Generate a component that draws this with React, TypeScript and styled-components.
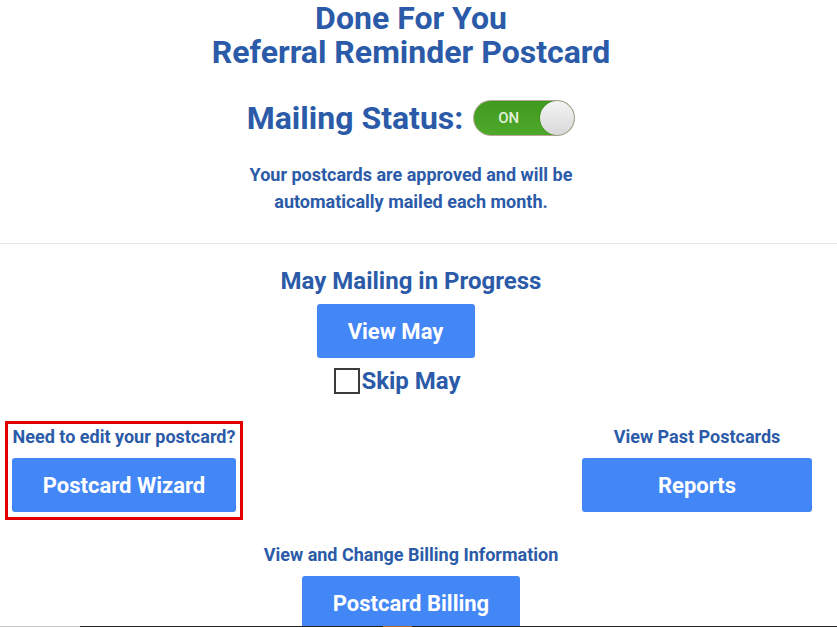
import React from 'react'
import styled, { createGlobalStyle } from 'styled-components'

const GlobalStyle = createGlobalStyle`
  body {
    margin: 0;
    background: #fff;
    font-family: Roboto, 'Liberation Sans', Arial, sans-serif;
  }
`

const blue = '#2b5ba8'

const Page = styled.div`
  width: 837px;
  height: 627px;
  overflow: hidden;
  position: relative;
`

// content column (page has a scrollbar gutter on the right)
const Content = styled.div`
  width: 822px;
  display: flex;
  flex-direction: column;
`

const Header = styled.section`
  display: flex;
  flex-direction: column;
  align-items: center;
  padding-top: 1px;
  padding-bottom: 28px;
`

const Rule = styled.hr`
  width: 837px;
  margin: 0;
  border: none;
  border-top: 1px solid #e6e6e6;
`

const Title = styled.h1`
  margin: 0;
  font-size: 32px;
  font-weight: 700;
  color: ${blue};
  text-align: center;
`

const TitleLine = styled.span`
  display: block;
  line-height: 34px;
`

const StatusRow = styled.div`
  display: flex;
  align-items: center;
  gap: 10px;
  margin-top: 30px;
`

const StatusLabel = styled.span`
  font-size: 32px;
  font-weight: 700;
  color: ${blue};
`

const Toggle = styled.div`
  position: relative;
  width: 102px;
  height: 36px;
  border-radius: 18px;
  background: linear-gradient(#3f9a1f, #4ea82a);
  border: 1px solid #b9a79a;
  box-sizing: border-box;
  display: flex;
  align-items: center;
  padding-left: 24px;
  color: #e4f0da;
  font-size: 15px;
  font-weight: 500;
`

const Knob = styled.span`
  position: absolute;
  right: 0;
  top: 0;
  width: 34px;
  height: 34px;
  border-radius: 50%;
  background: linear-gradient(#f4f4f4, #d8d8d8);
  box-shadow: 0 0 2px rgba(0, 0, 0, 0.3);
`

const Note = styled.p`
  margin: 24px 0 0;
  font-size: 18px;
  line-height: 27px;
  font-weight: 700;
  color: ${blue};
  text-align: center;
`

const Mailing = styled.section`
  display: flex;
  flex-direction: column;
  align-items: center;
  gap: 9px;
  padding-top: 23px;
`

const MailingActions = styled.div`
  display: flex;
  flex-direction: column;
  align-items: center;
  padding-right: 31px;
`

const SubTitle = styled.h2`
  margin: 0;
  font-size: 24px;
  line-height: 28px;
  font-weight: 700;
  color: ${blue};
`

const Button = styled.button<{ $w: number }>`
  width: ${p => p.$w}px;
  height: 54px;
  border: none;
  border-radius: 3px;
  background: #4386f5;
  color: #fff;
  font-family: inherit;
  font-size: 22px;
  font-weight: 700;
  cursor: pointer;
`

const SkipRow = styled.label`
  display: flex;
  align-items: center;
  gap: 1px;
  margin-top: 9px;
  margin-left: 4px;
  font-size: 24px;
  line-height: 28px;
  font-weight: 700;
  color: ${blue};
`

const Box = styled.span`
  width: 22px;
  height: 22px;
  border: 2px solid #3a3a3a;
  background: #fff;
`

const Columns = styled.div`
  display: flex;
  justify-content: space-between;
  padding: 26px 10px 0 5px;
`

const Highlight = styled.div`
  border: 3px solid #e00000;
  width: 238px;
  height: 99px;
  box-sizing: border-box;
  padding: 2px 4px 0 4px;
  display: flex;
  flex-direction: column;
  align-items: center;
  gap: 10px;
`

const Column = styled.div`
  display: flex;
  flex-direction: column;
  align-items: center;
  gap: 10px;
  padding-top: 5px;
`

const Caption = styled.div`
  font-size: 18px;
  line-height: 22px;
  font-weight: 700;
  color: ${blue};
  white-space: nowrap;
`

const Billing = styled.section`
  display: flex;
  flex-direction: column;
  align-items: center;
  gap: 10px;
  padding-top: 24px;
`

const BottomStrip = styled.div`
  position: absolute;
  left: 0;
  right: 0;
  bottom: 0;
  height: 1px;
  display: flex;
`

const Seg = styled.span<{ $c: string; $w: string }>`
  background: ${p => p.$c};
  width: ${p => p.$w};
`

export default function App() {
  return (
    <Page>
      <GlobalStyle />
      <Content>
        <Header>
          <Title>
            <TitleLine>Done For You</TitleLine>
            <TitleLine>Referral Reminder Postcard</TitleLine>
          </Title>
          <StatusRow>
            <StatusLabel>Mailing Status:</StatusLabel>
            <Toggle>
              ON
              <Knob />
            </Toggle>
          </StatusRow>
          <Note>
            Your postcards are approved and will be
            <br />
            automatically mailed each month.
          </Note>
        </Header>
        <Rule />
        <Mailing>
          <SubTitle>May Mailing in Progress</SubTitle>
          <MailingActions>
            <Button $w={158}>View May</Button>
            <SkipRow>
              <Box />
              Skip May
            </SkipRow>
          </MailingActions>
        </Mailing>
        <Columns>
          <Highlight>
            <Caption>Need to edit your postcard?</Caption>
            <Button $w={224}>Postcard Wizard</Button>
          </Highlight>
          <Column>
            <Caption>View Past Postcards</Caption>
            <Button $w={230}>Reports</Button>
          </Column>
        </Columns>
        <Billing>
          <Caption>View and Change Billing Information</Caption>
          <Button $w={218}>Postcard Billing</Button>
        </Billing>
      </Content>
      <BottomStrip>
        <Seg $c="#c8c8c8" $w="80px" />
        <Seg $c="#222" $w="303px" />
        <Seg $c="#b06a2a" $w="29px" />
        <Seg $c="#222" $w="425px" />
      </BottomStrip>
    </Page>
  )
}
